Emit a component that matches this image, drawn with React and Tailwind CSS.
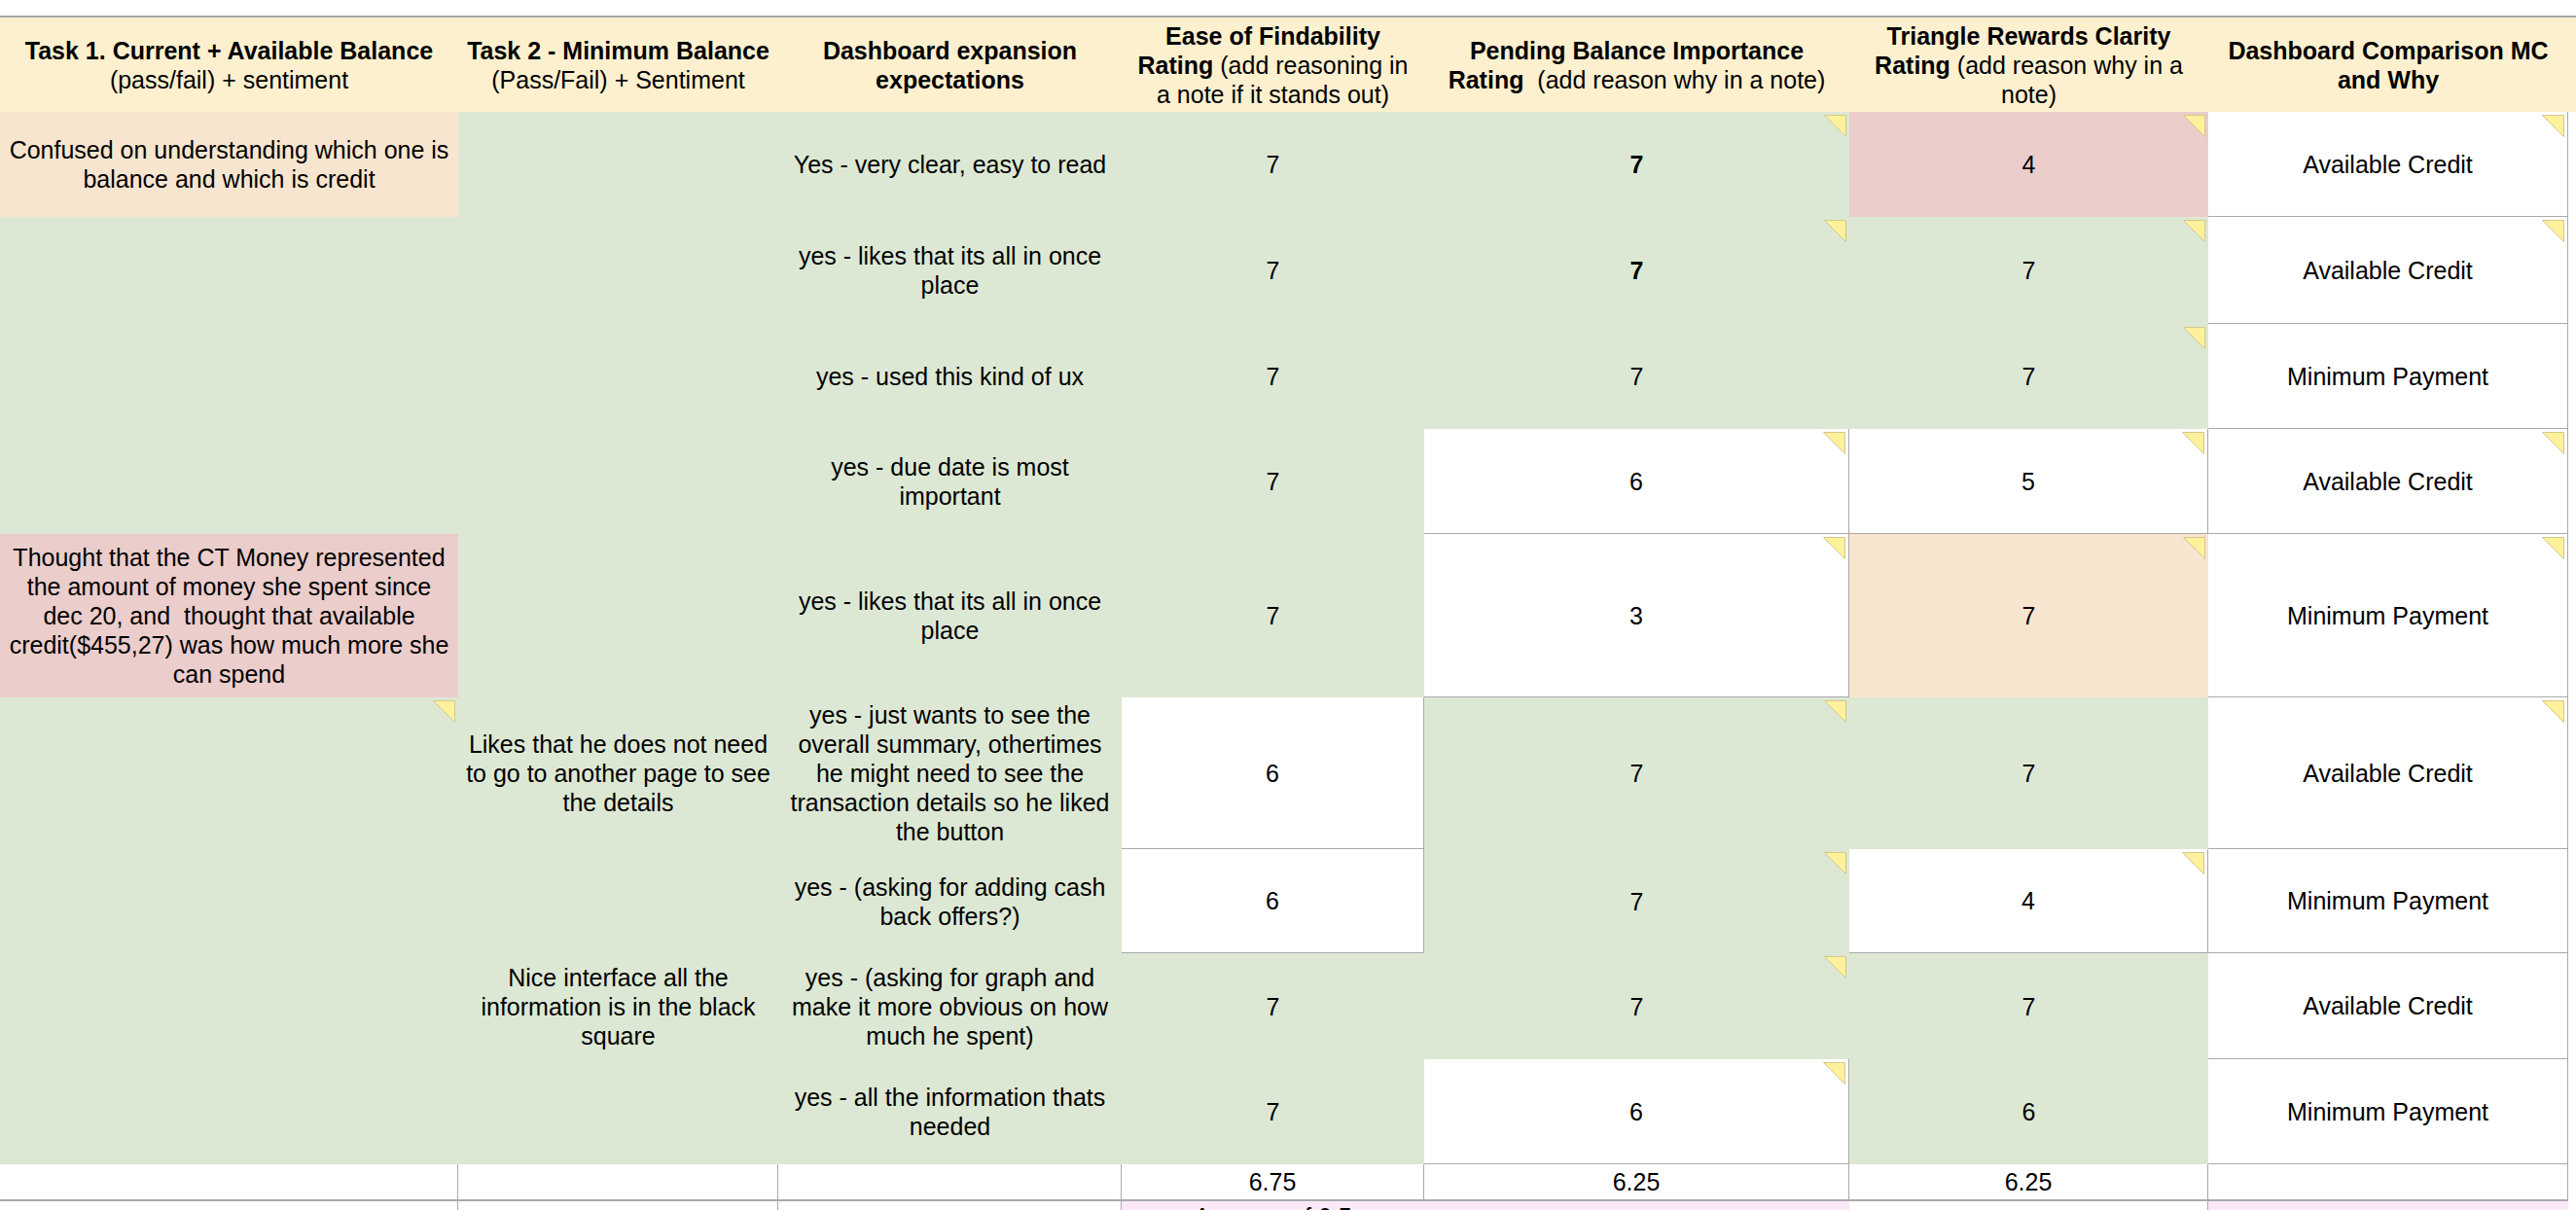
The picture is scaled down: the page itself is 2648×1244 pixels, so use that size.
import React from "react";

const fills = {
  G: "bg-[#dde8d4]",
  P: "bg-[#ebcdcb]",
  O: "bg-[#f7e5cf]",
  L: "bg-[#fbe9fa]",
};

const header = [
  [[{ b: "Task 1. Current + Available Balance" }], [{ r: "(pass/fail) + sentiment" }]],
  [[{ b: "Task 2 - Minimum Balance" }], [{ r: "(Pass/Fail) + Sentiment" }]],
  [[{ b: "Dashboard expansion" }], [{ b: "expectations" }]],
  [[{ b: "Ease of Findability" }], [{ b: "Rating" }, { r: " (add reasoning in" }], [{ r: "a note if it stands out)" }]],
  [[{ b: "Pending Balance Importance" }], [{ b: "Rating" }, { r: "\u00a0 (add reason why in a note)" }]],
  [[{ b: "Triangle Rewards Clarity" }], [{ b: "Rating" }, { r: " (add reason why in a" }], [{ r: "note)" }]],
  [[{ b: "Dashboard Comparison MC" }], [{ b: "and Why" }]],
];

const rows = [
  [
    { f: "O", t: ["Confused on understanding which one is", "balance and which is credit"] },
    { f: "G" },
    { f: "G", t: ["Yes - very clear, easy to read"] },
    { f: "G", t: ["7"] },
    { f: "G", t: ["7"], bold: true, n: true },
    { f: "P", t: ["4"], n: true },
    { t: ["Available Credit"], n: true },
  ],
  [
    { f: "G" },
    { f: "G" },
    { f: "G", t: ["yes - likes that its all in once", "place"] },
    { f: "G", t: ["7"] },
    { f: "G", t: ["7"], bold: true, n: true },
    { f: "G", t: ["7"], n: true },
    { t: ["Available Credit"], n: true },
  ],
  [
    { f: "G" },
    { f: "G" },
    { f: "G", t: ["yes - used this kind of ux"] },
    { f: "G", t: ["7"] },
    { f: "G", t: ["7"] },
    { f: "G", t: ["7"], n: true },
    { t: ["Minimum Payment"] },
  ],
  [
    { f: "G" },
    { f: "G" },
    { f: "G", t: ["yes - due date is most", "important"] },
    { f: "G", t: ["7"] },
    { t: ["6"], n: true },
    { t: ["5"], n: true },
    { t: ["Available Credit"], n: true },
  ],
  [
    {
      f: "P",
      t: [
        "Thought that the CT Money represented",
        "the amount of money she spent since",
        "dec 20, and \u00a0thought that available",
        "credit($455,27) was how much more she",
        "can spend",
      ],
    },
    { f: "G" },
    { f: "G", t: ["yes - likes that its all in once", "place"] },
    { f: "G", t: ["7"] },
    { t: ["3"], n: true },
    { f: "O", t: ["7"], n: true },
    { t: ["Minimum Payment"], n: true },
  ],
  [
    { f: "G", n: true },
    { f: "G", t: ["Likes that he does not need", "to go to another page to see", "the details"] },
    {
      f: "G",
      t: [
        "yes - just wants to see the",
        "overall summary, othertimes",
        "he might need to see the",
        "transaction details so he liked",
        "the button",
      ],
    },
    { t: ["6"] },
    { f: "G", t: ["7"], n: true },
    { f: "G", t: ["7"] },
    { t: ["Available Credit"], n: true },
  ],
  [
    { f: "G" },
    { f: "G" },
    { f: "G", t: ["yes - (asking for adding cash", "back offers?)"] },
    { t: ["6"] },
    { f: "G", t: ["7"], n: true },
    { t: ["4"], n: true },
    { t: ["Minimum Payment"] },
  ],
  [
    { f: "G" },
    { f: "G", t: ["Nice interface all the", "information is in the black", "square"] },
    { f: "G", t: ["yes - (asking for graph and", "make it more obvious on how", "much he spent)"] },
    { f: "G", t: ["7"] },
    { f: "G", t: ["7"], n: true },
    { f: "G", t: ["7"] },
    { t: ["Available Credit"] },
  ],
  [
    { f: "G" },
    { f: "G" },
    { f: "G", t: ["yes - all the information thats", "needed"] },
    { f: "G", t: ["7"] },
    { t: ["6"], n: true },
    { f: "G", t: ["6"] },
    { t: ["Minimum Payment"] },
  ],
];

function Note() {
  return (
    <svg className="absolute top-[3px] right-[3px]" width="23" height="23" viewBox="0 0 23 23">
      <polygon points="0.5,0.5 22.5,0.5 22.5,22.5" fill="#fdf19c" stroke="#d3c88c" strokeWidth="1" />
    </svg>
  );
}

function Cell({ f, t, bold, n }) {
  const look = f ? fills[f] : "border-r border-b border-[#a9a9a9]";
  return (
    <div className={`relative flex flex-col items-center justify-center text-center whitespace-nowrap ${look} ${bold ? "font-bold" : ""}`}>
      {(t || []).map((line, i) => (
        <div key={i}>{line}</div>
      ))}
      {n && <Note />}
    </div>
  );
}

export default function App() {
  return (
    <div className="w-[2648px] h-[1244px] overflow-hidden bg-white text-black font-['Liberation_Sans',Arial,sans-serif] text-[25px] leading-[30px]">
      <div className="h-[18px] border-b-2 border-[#a6a6a6]" />
      <div className="grid grid-cols-[471px_329px_353px_311px_437px_369px_370px_8px] grid-rows-[97px_108px_110px_108px_108px_168px_156px_107px_109px_108px_38px_38px]">
        {header.map((lines, i) => (
          <div key={i} className="flex flex-col items-center justify-center text-center whitespace-nowrap bg-[#fdf0cf]">
            {lines.map((parts, j) => (
              <div key={j}>
                {parts.map((p, k) =>
                  p.b ? (
                    <span key={k} className="font-bold">{p.b}</span>
                  ) : (
                    <span key={k}>{p.r}</span>
                  )
                )}
              </div>
            ))}
          </div>
        ))}
        <div className="bg-[#fdf0cf]" />

        {rows.map((row, r) => (
          <React.Fragment key={r}>
            {row.map((c, i) => (
              <Cell key={i} {...c} />
            ))}
            <div />
          </React.Fragment>
        ))}

        {/* averages */}
        <div className="border-r border-b-2 border-[#a9a9a9]" />
        <div className="border-r border-b-2 border-[#a9a9a9]" />
        <div className="border-r border-b-2 border-[#a9a9a9]" />
        <div className="flex items-center justify-center border-r border-b-2 border-[#a9a9a9]">6.75</div>
        <div className="flex items-center justify-center border-r border-b-2 border-[#a9a9a9]">6.25</div>
        <div className="flex items-center justify-center border-r border-b-2 border-[#a9a9a9]">6.25</div>
        <div className="border-r border-b-2 border-[#a9a9a9]" />
        <div />

        <div className="border-r border-b border-[#a9a9a9]" />
        <div className="border-r border-b border-[#a9a9a9]" />
        <div className="border-r border-b border-[#a9a9a9]" />
        <div className="col-span-2 flex justify-start bg-[#fbe9fa] pt-[1px]">
          <div className="w-[311px] text-center whitespace-nowrap">Average of 6.5</div>
        </div>
        <div className="border-r border-b border-[#a9a9a9]" />
        <div className="bg-[#fbe9fa]" />
        <div />
      </div>
    </div>
  );
}
